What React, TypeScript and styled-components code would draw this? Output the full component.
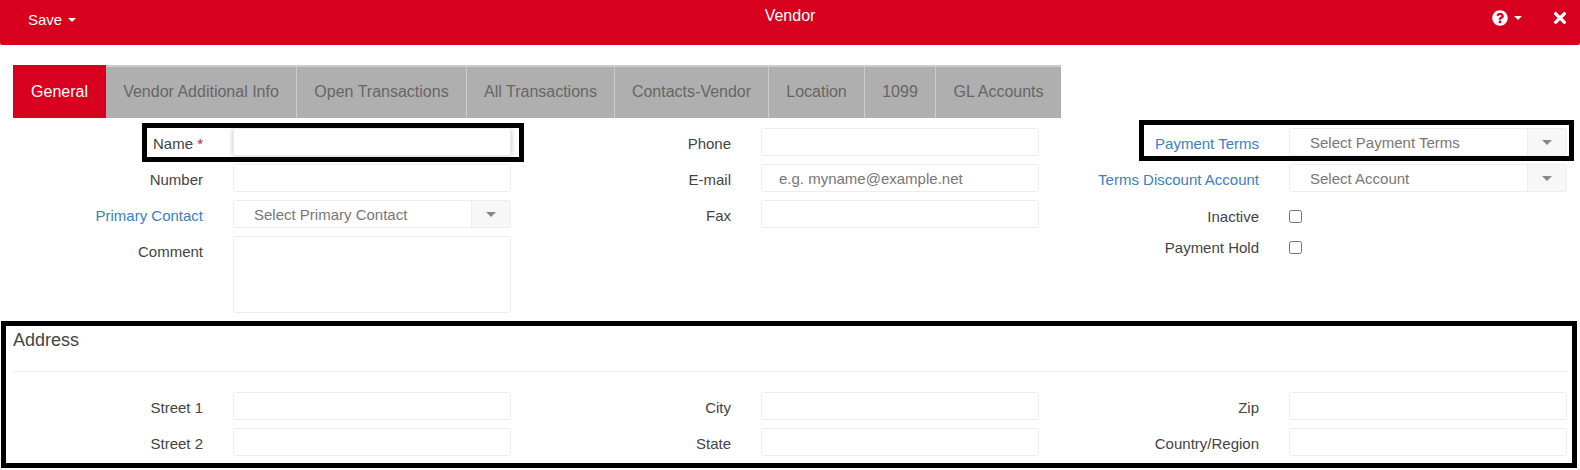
import React from "react";
import styled, { createGlobalStyle } from "styled-components";
import { FaQuestionCircle, FaTimes } from "react-icons/fa";

const Global = createGlobalStyle`
  html, body { margin: 0; padding: 0; background: #fff; }
  body { font-family: "Liberation Sans", Arial, sans-serif; font-size: 15px; color: #444; }
  * { box-sizing: border-box; }
`;

const Page = styled.div`
  width: 1580px;
  height: 470px;
  overflow: hidden;
`;

const Header = styled.header`
  height: 45px;
  background: #d7001e;
  color: #fff;
  display: grid;
  grid-template-columns: 1fr auto 1fr;
  border-radius: 0 0 2px 2px;
`;

const SaveMenu = styled.div`
  display: flex;
  align-items: center;
  gap: 6px;
  height: 39px;
  margin-left: 28px;
  font-size: 15px;
`;

const Caret = styled.span<{ $color?: string; $size?: number }>`
  display: inline-block;
  width: 0;
  height: 0;
  border-left: ${(p) => p.$size || 4}px solid transparent;
  border-right: ${(p) => p.$size || 4}px solid transparent;
  border-top: ${(p) => p.$size || 4}px solid ${(p) => p.$color || "#fff"};
`;

const Title = styled.div`
  height: 31px;
  display: flex;
  align-items: center;
  font-size: 16px;
`;

const HeaderTools = styled.div`
  display: flex;
  justify-content: flex-end;
  align-items: center;
  height: 36px;
  padding-right: 11px;
`;

const HelpMenu = styled.div`
  display: flex;
  align-items: center;
  gap: 6px;
  margin-right: 29px;
  font-size: 16px;
  line-height: 0;
`;

const CloseIcon = styled(FaTimes)`
  font-size: 18px;
`;

const Tabs = styled.nav`
  display: flex;
  width: 1048px;
  height: 53px;
  margin: 20px 0 0 13px;
  background: #afafaf;
  border-top: 2px solid #ccc;
`;

const Tab = styled.div<{ $active?: boolean; $width: number }>`
  width: ${(p) => p.$width}px;
  display: flex;
  align-items: center;
  justify-content: center;
  padding-bottom: ${(p) => (p.$active ? "0" : "2px")};
  font-size: 16px;
  color: ${(p) => (p.$active ? "#fff" : "#666")};
  background: ${(p) => (p.$active ? "#d7001e" : "transparent")};
  margin-top: ${(p) => (p.$active ? "-2px" : "0")};
  border-right: ${(p) => (p.$active ? "none" : "1px solid #ccc")};
  &:last-child { border-right: none; }
`;

const FormColumns = styled.section`
  display: grid;
  grid-template-columns: 528px 528px 498px;
  height: 193px;
  margin-top: 10px;
  padding-left: 13px;
`;

const Column = styled.div`
  display: flex;
  flex-direction: column;
  gap: 8px;
`;

const CheckGroup = styled(Column)`
  padding-top: 5px;
`;

const Field = styled.div`
  position: relative;
  display: grid;
  grid-template-columns: 190px 278px;
  column-gap: 30px;
  align-items: start;
`;

const Label = styled.label<{ $link?: boolean }>`
  height: 28px;
  text-align: right;
  line-height: 32px;
  white-space: nowrap;
  color: ${(p) => (p.$link ? "#3c80c0" : "#444")};
`;

const Required = styled.span`
  color: #e4003a;
`;

const Input = styled.div<{ $shadow?: boolean }>`
  height: 28px;
  border: 1px solid #eee;
  border-radius: 2px;
  background: #fff;
  padding: 0 17px;
  line-height: 28px;
  color: #777;
  box-shadow: ${(p) => (p.$shadow ? "0 0 5px rgba(0,0,0,.25)" : "none")};
`;

const TextArea = styled(Input)`
  height: 77px;
`;

const SelectBox = styled.div`
  height: 28px;
  display: flex;
  border: 1px solid #eee;
  border-radius: 2px;
  color: #777;
  line-height: 28px;
`;

const SelectText = styled.span`
  flex: 1;
  padding-left: 20px;
`;

const SelectArrow = styled.span`
  width: 39px;
  background: #f7f7f7;
  border-left: 1px solid #eee;
  display: flex;
  align-items: center;
  justify-content: center;
`;

const CheckField = styled(Field)`
  height: 23px;
  align-items: center;
`;

const CheckLabel = styled(Label)`
  height: 23px;
  line-height: 23px;
`;

const Check = styled.span`
  display: block;
  width: 13px;
  height: 13px;
  border: 1px solid #767676;
  border-radius: 2.5px;
  background: #fff;
`;

const Highlight = styled.div<{ $left: number; $top: number; $w: number; $h: number }>`
  position: absolute;
  left: ${(p) => p.$left}px;
  top: ${(p) => p.$top}px;
  width: ${(p) => p.$w}px;
  height: ${(p) => p.$h}px;
  border: 5px solid #000;
  pointer-events: none;
`;

const AddressSection = styled.section`
  width: 1576px;
  height: 147px;
  margin-left: 1px;
  border: 5px solid #000;
  padding: 0 5px 0 7px;
`;

const AddressTitle = styled.div`
  height: 46px;
  font-size: 18px;
  line-height: 28px;
  color: #444;
  border-bottom: 1px solid #eee;
`;

const AddressGrid = styled.div`
  display: grid;
  grid-template-columns: 528px 528px 498px;
  margin-top: 20px;
`;

const selectCaret = <Caret $color="#888" $size={5} />;

export default function App() {
  return (
    <Page>
      <Global />
      <Header>
        <SaveMenu>
          <span>Save</span>
          <Caret />
        </SaveMenu>
        <Title>Vendor</Title>
        <HeaderTools>
          <HelpMenu>
            <FaQuestionCircle />
            <Caret />
          </HelpMenu>
          <CloseIcon />
        </HeaderTools>
      </Header>

      <Tabs>
        <Tab $active $width={93}>General</Tab>
        <Tab $width={191}>Vendor Additional Info</Tab>
        <Tab $width={170}>Open Transactions</Tab>
        <Tab $width={148}>All Transactions</Tab>
        <Tab $width={154}>Contacts-Vendor</Tab>
        <Tab $width={96}>Location</Tab>
        <Tab $width={71}>1099</Tab>
        <Tab $width={125}>GL Accounts</Tab>
      </Tabs>

      <FormColumns>
        <Column>
          <Field>
            <Label>Name <Required>*</Required></Label>
            <Input $shadow />
            <Highlight $left={129} $top={-5} $w={382} $h={39} />
          </Field>
          <Field>
            <Label>Number</Label>
            <Input />
          </Field>
          <Field>
            <Label $link>Primary Contact</Label>
            <SelectBox>
              <SelectText>Select Primary Contact</SelectText>
              <SelectArrow>{selectCaret}</SelectArrow>
            </SelectBox>
          </Field>
          <Field>
            <Label>Comment</Label>
            <TextArea />
          </Field>
        </Column>
        <Column>
          <Field>
            <Label>Phone</Label>
            <Input />
          </Field>
          <Field>
            <Label>E-mail</Label>
            <Input>e.g. myname@example.net</Input>
          </Field>
          <Field>
            <Label>Fax</Label>
            <Input />
          </Field>
        </Column>
        <Column>
          <Field>
            <Label $link>Payment Terms</Label>
            <SelectBox>
              <SelectText>Select Payment Terms</SelectText>
              <SelectArrow>{selectCaret}</SelectArrow>
            </SelectBox>
            <Highlight $left={70} $top={-8} $w={435} $h={41} />
          </Field>
          <Field>
            <Label $link>Terms Discount Account</Label>
            <SelectBox>
              <SelectText>Select Account</SelectText>
              <SelectArrow>{selectCaret}</SelectArrow>
            </SelectBox>
          </Field>
          <CheckGroup>
            <CheckField>
              <CheckLabel>Inactive</CheckLabel>
              <Check />
            </CheckField>
            <CheckField>
              <CheckLabel>Payment Hold</CheckLabel>
              <Check />
            </CheckField>
          </CheckGroup>
        </Column>
      </FormColumns>

      <AddressSection>
        <AddressTitle>Address</AddressTitle>
        <AddressGrid>
          <Column>
            <Field><Label>Street 1</Label><Input /></Field>
            <Field><Label>Street 2</Label><Input /></Field>
          </Column>
          <Column>
            <Field><Label>City</Label><Input /></Field>
            <Field><Label>State</Label><Input /></Field>
          </Column>
          <Column>
            <Field><Label>Zip</Label><Input /></Field>
            <Field><Label>Country/Region</Label><Input /></Field>
          </Column>
        </AddressGrid>
      </AddressSection>
    </Page>
  );
}
